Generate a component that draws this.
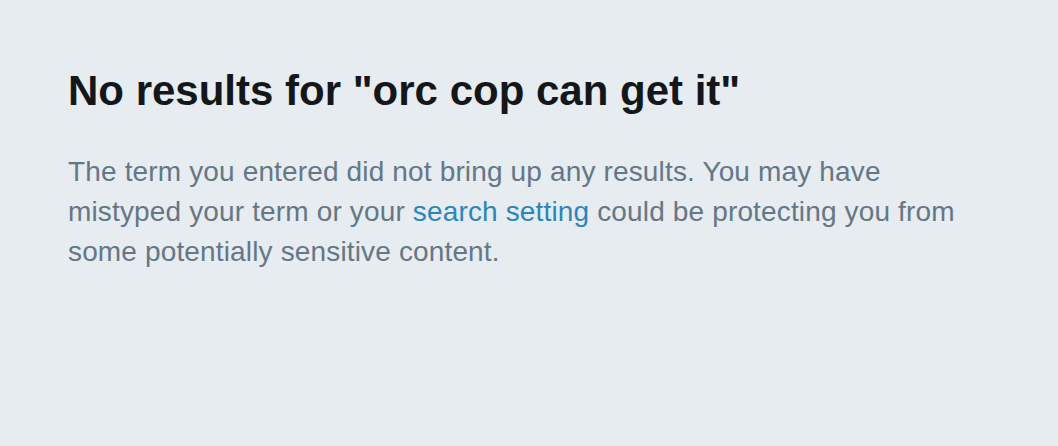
export default function App() {
  return (
    <div className="min-h-[446px] w-full bg-[#e6ecf0] px-[68px] pt-[67px] font-['Liberation_Sans',Arial,sans-serif]">
      <h1 className="text-[42px] font-bold leading-[48px] text-[#14171a]">
        No results for "orc cop can get it"
      </h1>
      <p className="mt-[37px] max-w-[910px] text-[28px] leading-[40px] tracking-[0.15px] text-[#657786]">
        The term you entered did not bring up any results. You may have mistyped your term or your{" "}
        <a href="#" className="text-[#2b86bb]">
          search setting
        </a>{" "}
        could be protecting you from some potentially sensitive content.
      </p>
    </div>
  );
}
